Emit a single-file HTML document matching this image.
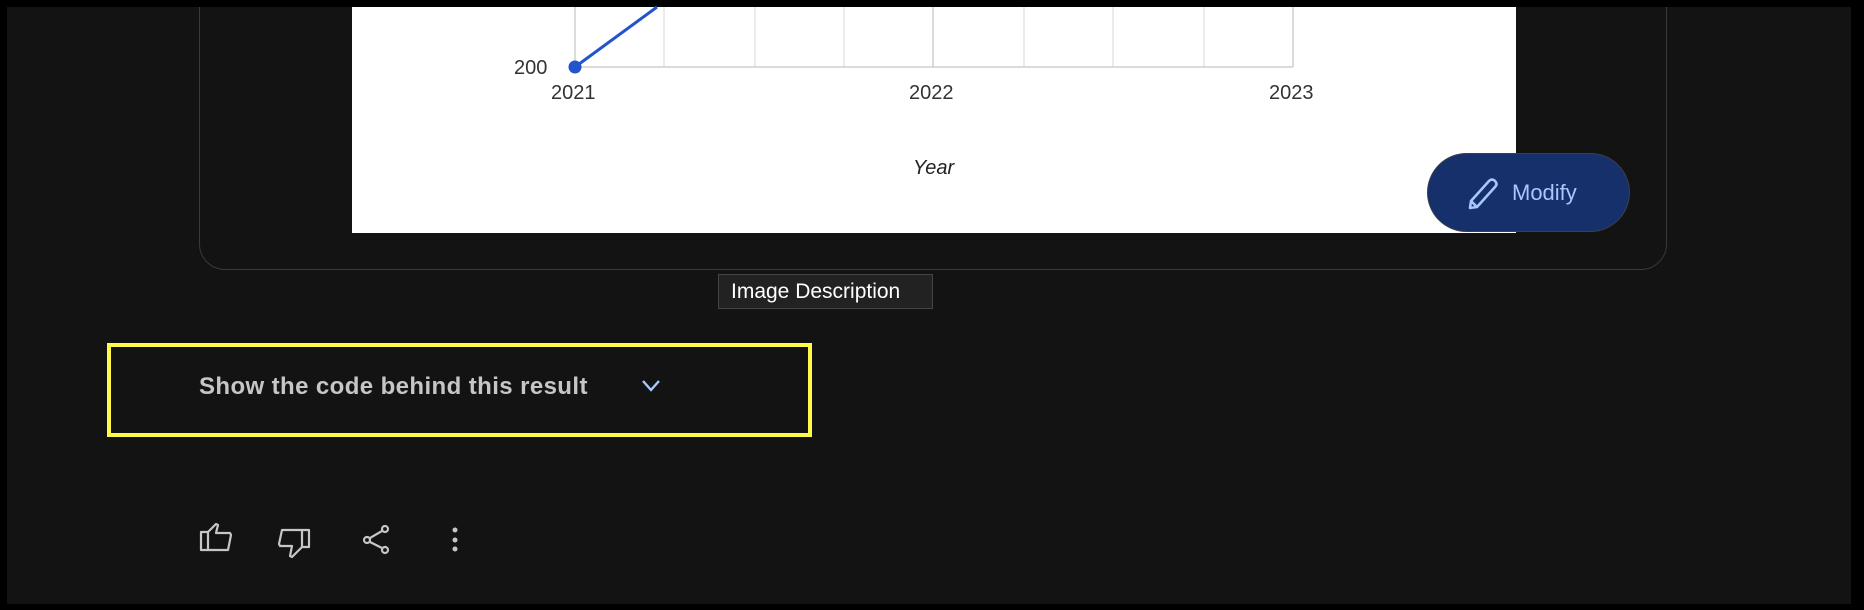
<!DOCTYPE html>
<html><head><meta charset="utf-8"><style>
html,body{margin:0;padding:0}
body{width:1864px;height:610px;background:#000;position:relative;overflow:hidden;font-family:"Liberation Sans",sans-serif}
.bg{position:absolute;left:7px;top:7px;width:1844px;height:597px;background:#131313;overflow:hidden}
.card{position:absolute;left:192px;top:-40px;width:1468px;height:303px;border:1px solid #3a3a3a;border-radius:26px;box-sizing:border-box}
.chart{position:absolute;left:352px;top:7px;width:1164px;height:226px;background:#fff}
.t{position:absolute;color:#333;font-size:20px;line-height:20px}
.btn{position:absolute;left:1427px;top:153px;width:203px;height:79px;border-radius:40px;background:#15306b;border:1px solid #3a3f4a;box-sizing:border-box}
.btn span{position:absolute;left:84px;top:27px;color:#a8c7fa;font-size:22px;line-height:24px}
.tip{position:absolute;left:718px;top:274px;width:215px;height:35px;background:#222;border:1px solid #444;box-sizing:border-box;color:#fff;font-size:21px;line-height:33px;padding-left:12px}
.yb{position:absolute;left:107px;top:343px;width:705px;height:94px;border:4px solid #fff94a;box-sizing:border-box}
.show{position:absolute;left:199px;top:373px;color:#c4c7c5;font-size:24px;line-height:28px;font-weight:bold;letter-spacing:0.4px}
</style></head><body>
<div class="bg"><div class="card"></div></div>
<div class="chart"></div>
<svg style="position:absolute;left:0;top:0" width="1864" height="610">
<g stroke="#e4e4e4" stroke-width="1.5">
<line x1="664" y1="7" x2="664" y2="67"/><line x1="755" y1="7" x2="755" y2="67"/><line x1="844" y1="7" x2="844" y2="67"/>
<line x1="1024" y1="7" x2="1024" y2="67"/><line x1="1113" y1="7" x2="1113" y2="67"/><line x1="1204" y1="7" x2="1204" y2="67"/>
</g>
<g stroke="#cfcfcf" stroke-width="1.5">
<line x1="575" y1="7" x2="575" y2="67"/><line x1="933" y1="7" x2="933" y2="67"/><line x1="1293" y1="7" x2="1293" y2="67"/>
<line x1="575" y1="67" x2="1293" y2="67"/>
</g>
<line x1="575" y1="67" x2="657" y2="7" stroke="#2255cc" stroke-width="3"/>
<circle cx="575" cy="67" r="6.5" fill="#2255cc"/>
<path d="M643 381 L651 390 L659 381" fill="none" stroke="#a8c7fa" stroke-width="2.4"/>
<g fill="none" stroke="#c4c7c5" stroke-width="2.2" stroke-linejoin="round">
<path d="M201 532 H208 V550 H201 Z"/>
<path d="M208 532 L216 524 L218 525 L216 533 H230 L231 535 L228 550 H208"/>
<path d="M309 530 H302 V547 H309 Z"/>
<path d="M302 530 H282 L279 544 L280 546 H292 L290 556 L292 557 L302 547"/>
<circle cx="385" cy="529" r="3"/><circle cx="367" cy="540" r="3"/><circle cx="385" cy="550" r="3"/>
<line x1="382" y1="531" x2="370" y2="538"/><line x1="370" y1="542" x2="382" y2="548"/>
</g>
<g fill="#c4c7c5"><circle cx="455" cy="530" r="2.5"/><circle cx="455" cy="540" r="2.5"/><circle cx="455" cy="549" r="2.5"/></g>
</svg>
<div class="t" style="left:514px;top:58px">200</div>
<div class="t" style="left:551px;top:83px">2021</div>
<div class="t" style="left:909px;top:83px">2022</div>
<div class="t" style="left:1269px;top:83px">2023</div>
<div class="t" style="left:913px;top:158px;font-style:italic;color:#222">Year</div>
<div class="btn">
<svg style="position:absolute;left:38px;top:23px" width="36" height="36"><g fill="none" stroke="#a8c7fa" stroke-width="2.6" stroke-linejoin="round">
<path d="M4 31 L5 24 L23 4 Q26 1 29 4 Q32 7 29 10 L11 30 Z"/>
<line x1="5" y1="24" x2="11" y2="30"/>
</g></svg>
<span>Modify</span></div>
<div class="tip">Image Description</div>
<div class="yb"></div>
<div class="show">Show the code behind this result</div>
</body></html>
